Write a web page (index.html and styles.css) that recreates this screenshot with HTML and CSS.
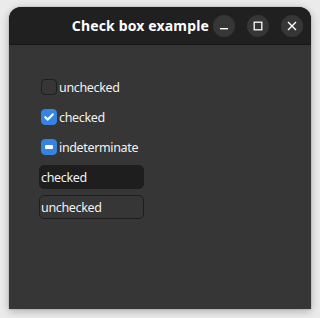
FILE: index.html
```html
<!DOCTYPE html>
<html>
<head>
<meta charset="utf-8">
<link rel="stylesheet" href="styles.css">
</head>
<body>
<div class="window">
  <div class="titlebar">
    <div class="title">Check box example</div>
    <div class="wbtn">
      <svg width="10" height="10" viewBox="0 0 10 10"><rect x="1" y="7" width="8" height="1.4" fill="#fff"/></svg>
    </div>
    <div class="wbtn">
      <svg width="10" height="10" viewBox="0 0 10 10"><rect x="1.2" y="1.2" width="7.6" height="7.6" fill="none" stroke="#fff" stroke-width="1.3"/></svg>
    </div>
    <div class="wbtn">
      <svg width="10" height="10" viewBox="0 0 10 10"><path d="M1 1 L9 9 M9 1 L1 9" stroke="#fff" stroke-width="1.4"/></svg>
    </div>
  </div>
  <div class="content">
    <div class="row">
      <span class="box"></span><span class="label">unchecked</span>
    </div>
    <div class="row">
      <span class="box on">
        <svg width="12" height="12" viewBox="0 0 12 12"><path d="M2.3 6.2 L4.8 8.6 L9.7 3.4" fill="none" stroke="#fff" stroke-width="2.2" stroke-linecap="round" stroke-linejoin="round"/></svg>
      </span><span class="label">checked</span>
    </div>
    <div class="row">
      <span class="box on"><span class="dash"></span></span><span class="label">indeterminate</span>
    </div>
    <div class="row">
      <div class="entry filled">checked</div>
    </div>
    <div class="row">
      <div class="entry">unchecked</div>
    </div>
  </div>
</div>
</body>
</html>
```
FILE: styles.css
```css
html, body {
  margin: 0;
  padding: 0;
}
body {
  width: 320px;
  height: 318px;
  background: #ebebeb;
  padding: 7px 9px;
  box-sizing: border-box;
  font-family: "Noto Sans", "DejaVu Sans", sans-serif;
  overflow: hidden;
}
.window {
  width: 302px;
  height: 302px;
  background: #363636;
  border-radius: 12px 12px 0 0;
  box-shadow: 0 2px 9px rgba(0,0,0,0.28), 0 0 0 1px rgba(0,0,0,0.06);
  overflow: hidden;
  display: flex;
  flex-direction: column;
}
.titlebar {
  height: 37px;
  background: #202020;
  border-bottom: 1px solid #171717;
  display: flex;
  align-items: center;
  justify-content: flex-end;
  padding-right: 8px;
  flex-shrink: 0;
}
.title {
  color: #ffffff;
  font-weight: bold;
  font-size: 14px;
  letter-spacing: 0.15px;
  margin-right: 4px;
}
.wbtn {
  width: 22px;
  height: 22px;
  border-radius: 50%;
  background: #363636;
  display: flex;
  align-items: center;
  justify-content: center;
  margin-left: 12px;
}
.title + .wbtn {
  margin-left: 0;
}
.content {
  padding-top: 27px;
  padding-left: 30px;
  display: flex;
  flex-direction: column;
}
.row {
  height: 30px;
  display: flex;
  align-items: center;
}
.box {
  width: 16px;
  height: 16px;
  box-sizing: border-box;
  border: 1px solid #1e1e1e;
  border-radius: 4px;
  background: #363636;
  margin-left: 2px;
  margin-right: 2px;
  display: flex;
  align-items: center;
  justify-content: center;
}
.box.on {
  background: #3584e4;
  border-color: #3584e4;
}
.dash {
  width: 8px;
  height: 4px;
  background: #fff;
  border-radius: 1px;
}
.label {
  color: #f2f2f2;
  font-size: 12.5px;
  letter-spacing: -0.35px;
}
.entry {
  width: 105px;
  height: 24px;
  box-sizing: border-box;
  border-radius: 5px;
  border: 1px solid #1e1e1e;
  color: #f2f2f2;
  font-size: 12.5px;
  letter-spacing: -0.35px;
  padding-left: 1px;
  display: flex;
  align-items: center;
}
.entry.filled {
  background: #1e1e1e;
}
```
